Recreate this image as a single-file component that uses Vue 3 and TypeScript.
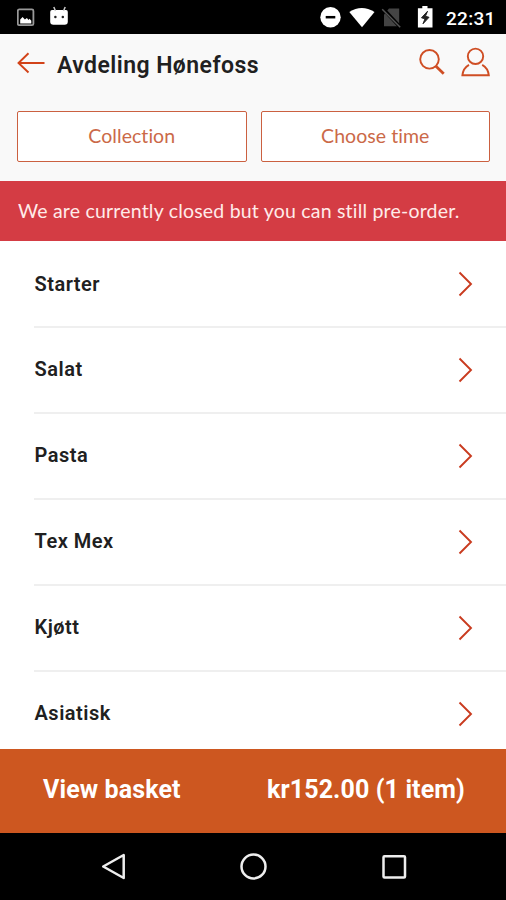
<script setup lang="ts">
const options: string[] = ['Collection', 'Choose time']
const categories: string[] = ['Starter', 'Salat', 'Pasta', 'Tex Mex', 'Kjøtt', 'Asiatisk']
</script>

<template>
  <div class="screen">
    <div class="status">
      <svg class="status-left" width="60" height="34" viewBox="0 0 60 34">
        <rect x="0.8" y="9.400" width="15.600" height="15.800" rx="1.500" fill="none" stroke="#999" stroke-width="1.800" />
        <path d="M3.200 23.400V19.500L5.600 17l2.300 2.600 2-1.600 1.600 2 1-1.300 1.800 2v2.700z" fill="#fff" />
        <path d="M35 10h14q1.800 0 1.800 2v9.500q0 3.200-3.200 3.200h-11.200q-3.200 0-3.200-3.200V12q0-2 1.800-2z" fill="#fff" />
        <path d="M38.500 11L36.800 7M46.500 11l1.700-4" stroke="#ccc" stroke-width="1.500" />
        <circle cx="38.400" cy="17" r="1.250" fill="#222" />
        <circle cx="45.800" cy="17" r="1.250" fill="#222" />
      </svg>
      <svg class="status-right" width="116" height="34" viewBox="318 0 116 34">
        <circle cx="330.500" cy="17.300" r="10.200" fill="#fff" />
        <path d="M325.700 17.200h9.600" stroke="#000" stroke-width="2.500" />
        <path d="M349.300 12.100q12.400-8.300 25.200 0L362 27.200z" fill="#fff" />
        <path d="M384 14.500l5-6h10.200v17.700H384z" fill="#444" />
        <path d="M382.500 8l18.500 20" stroke="#000" stroke-width="3.500" />
        <path d="M382.200 9.300l18 18" stroke="#555" stroke-width="1.500" />
        <path d="M422.300 6h5.200v2.200h5v19.300h-14.600V8.200h4.400z" fill="#fff" />
        <path d="M427.500 11.300l-6 6.500 3.500 1-2 5 6-6.500-3.600-1z" fill="#222" stroke="#222" />
      </svg>
      <span class="clock">22:31</span>
    </div>

    <header class="header">
      <svg class="back" width="30" height="24" viewBox="0 0 30 24" fill="none" stroke="#d24319" stroke-width="1.900">
        <path d="M11.500 2.200L1.500 12l10 9.500M1.500 12h26" />
      </svg>
      <h1 class="title">Avdeling Hønefoss</h1>
      <svg class="tools" width="74" height="32" viewBox="417 46 74 32" fill="none" stroke="#cf4e24" stroke-width="1.900">
        <circle cx="429.500" cy="59.300" r="9.300" />
        <path d="M435.700 66l8 7.800" stroke-width="2.800" />
        <circle cx="475.500" cy="56.300" r="7.700" />
        <path d="M469 64.800q-5.800 3.200-6.600 10.400h26.400q-.8-7.200-6.600-10.400" />
      </svg>
    </header>

    <div class="options">
      <button v-for="option in options" :key="option" class="option">{{ option }}</button>
    </div>

    <div class="notice"><span>We are currently closed but you can still pre-order.</span></div>

    <ul class="categories">
      <li v-for="name in categories" :key="name" class="category">
        <span>{{ name }}</span>
        <svg width="16" height="26" viewBox="0 0 16 26" fill="none" stroke="#c93b1f" stroke-width="1.900">
          <path d="M1.500 1.500L13 13 1.500 24.500" />
        </svg>
      </li>
    </ul>

    <div class="basket">
      <span class="basket-label">View basket</span>
      <span class="basket-total">kr152.00 (1 item)</span>
    </div>

    <nav class="nav">
      <svg width="506" height="67" viewBox="0 833 506 67" fill="none" stroke="#eee" stroke-width="2.500">
        <path d="M123.700 855v23l-20.500-11.500z" stroke-linejoin="round" />
        <circle cx="253.500" cy="866.500" r="12" />
        <rect x="383.500" y="856.300" width="21.500" height="21.200" rx="1" />
      </svg>
    </nav>
  </div>
</template>

<style>
body {
  margin: 0;
}
</style>

<style scoped>
.screen {
  width: 506px;
  height: 900px;
  display: flex;
  flex-direction: column;
  overflow: hidden;
  background: #fff;
  color: #202020;
  font-family: Roboto, sans-serif;
}
.status {
  flex: none;
  display: flex;
  box-sizing: border-box;
  height: 34px;
  padding-left: 17px;
  background: #000;
}
.status-right {
  margin-left: 241px;
}
.clock {
  margin-left: 12px;
  color: #fff;
  font-size: 19px;
  font-weight: 500;
  line-height: 37px;
  letter-spacing: 0.3px;
}
.header {
  flex: none;
  display: flex;
  height: 77px;
  padding-left: 17px;
  background: #f9f9f9;
}
.back {
  margin-top: 17px;
}
.title {
  margin: 0 0 0 10px;
  width: 343px;
  font-size: 23px;
  font-weight: 600;
  line-height: 63px;
  letter-spacing: 0.450px;
}
.tools {
  margin: 12px 0 0 17px;
}
.options {
  flex: none;
  display: flex;
  gap: 14px;
  height: 51px;
  padding: 0 16px 19px 17px;
  background: #f9f9f9;
}
.option {
  appearance: none;
  flex: 1;
  padding: 0 0 2px;
  border: 1px solid #cb6040;
  border-radius: 2px;
  background: #fff;
  color: #cb6948;
  font-family: Lato, sans-serif;
  font-size: 19.500px;
  letter-spacing: 0.05px;
}
.notice {
  flex: none;
  box-sizing: border-box;
  height: 60px;
  padding-left: 18px;
  background: #d43c44;
  color: #ffebe9;
  font-family: Lato, sans-serif;
  font-size: 19.500px;
  line-height: 59px;
  letter-spacing: 0.2px;
  white-space: nowrap;
}
.categories {
  flex: none;
  height: 508px;
  margin: 0;
  padding: 0 0 0 34px;
  overflow: hidden;
  list-style: none;
}
.category {
  display: flex;
  align-items: center;
  justify-content: space-between;
  box-sizing: border-box;
  height: 85.900px;
  padding-right: 32px;
  border-bottom: 2px solid #efefef;
  font-size: 20px;
  font-weight: 600;
  letter-spacing: 0.500px;
}
.category span {
  padding: 0 0 1px 0.500px;
}
.category:first-child {
  height: 87px;
}
.category:first-child span {
  padding-bottom: 0;
}
.basket {
  flex: none;
  display: flex;
  justify-content: space-between;
  height: 84px;
  padding: 0 41px 0 43px;
  background: #cd5720;
  color: #fff;
  font-size: 25px;
  font-weight: 700;
  line-height: 82px;
  letter-spacing: 0.120px;
}
.nav {
  height: 67px;
  background: #000;
}
</style>
